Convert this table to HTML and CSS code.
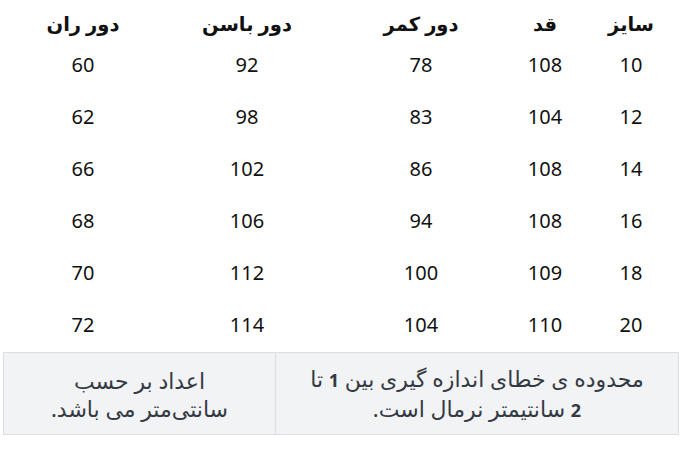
FILE: index.html
```html
<!DOCTYPE html>
<html lang="fa" dir="rtl">
<head>
<meta charset="utf-8">
<link rel="stylesheet" href="styles.css">
</head>
<body>
<div class="size-table">
  <div class="row head">
    <div class="cell">سایز</div><div class="cell">قد</div><div class="cell">دور کمر</div><div class="cell">دور باسن</div><div class="cell">دور ران</div>
  </div>
  <div class="row"><div class="cell">10</div><div class="cell">108</div><div class="cell">78</div><div class="cell">92</div><div class="cell">60</div></div>
  <div class="row"><div class="cell">12</div><div class="cell">104</div><div class="cell">83</div><div class="cell">98</div><div class="cell">62</div></div>
  <div class="row"><div class="cell">14</div><div class="cell">108</div><div class="cell">86</div><div class="cell">102</div><div class="cell">66</div></div>
  <div class="row"><div class="cell">16</div><div class="cell">108</div><div class="cell">94</div><div class="cell">106</div><div class="cell">68</div></div>
  <div class="row"><div class="cell">18</div><div class="cell">109</div><div class="cell">100</div><div class="cell">112</div><div class="cell">70</div></div>
  <div class="row"><div class="cell">20</div><div class="cell">110</div><div class="cell">104</div><div class="cell">114</div><div class="cell">72</div></div>
</div>
<div class="note">
  <div class="note-cell"><p class="note-text">محدوده ی خطای اندازه گیری بین <b>1</b> تا<br><b>2</b> سانتیمتر نرمال است.</p></div>
  <div class="note-cell"><p class="note-text">اعداد بر حسب<br>سانتی‌متر می باشد.</p></div>
</div>
</body>
</html>
```
FILE: styles.css
```css
html, body {
  margin: 0;
  padding: 0;
  background: #ffffff;
}
body {
  font-family: "Noto Sans", "DejaVu Sans", sans-serif;
  color: #111111;
  width: 680px;
  direction: rtl;
}
.size-table {
  width: 674px;
  margin-left: 6px;
}
.row {
  display: grid;
  grid-template-columns: 98px 74px 174px 174px 154px;
  height: 52px;
  align-items: center;
  font-size: 20px;
}
.row.head {
  height: 38px;
  box-sizing: border-box;
  padding-top: 8px;
  font-weight: 700;
  font-size: 19.5px;
}
.cell {
  text-align: center;
}
.note {
  display: grid;
  grid-template-columns: 1fr 272px;
  margin: 2px 1px 0 3px;
  height: 83px;
  box-sizing: border-box;
  border: 1px solid #dcdee2;
  background: #f2f3f5;
  color: #343a44;
  font-size: 22px;
  line-height: 28px;
}
.note-cell {
  display: flex;
  align-items: center;
  justify-content: center;
  padding: 0 12px;
}
.note-text {
  margin: 0;
  text-align: center;
  white-space: nowrap;
}
.note-cell + .note-cell {
  border-right: 1px solid #dcdee2;
}
.note b {
  font-weight: 700;
  font-size: 18px;
}
```
